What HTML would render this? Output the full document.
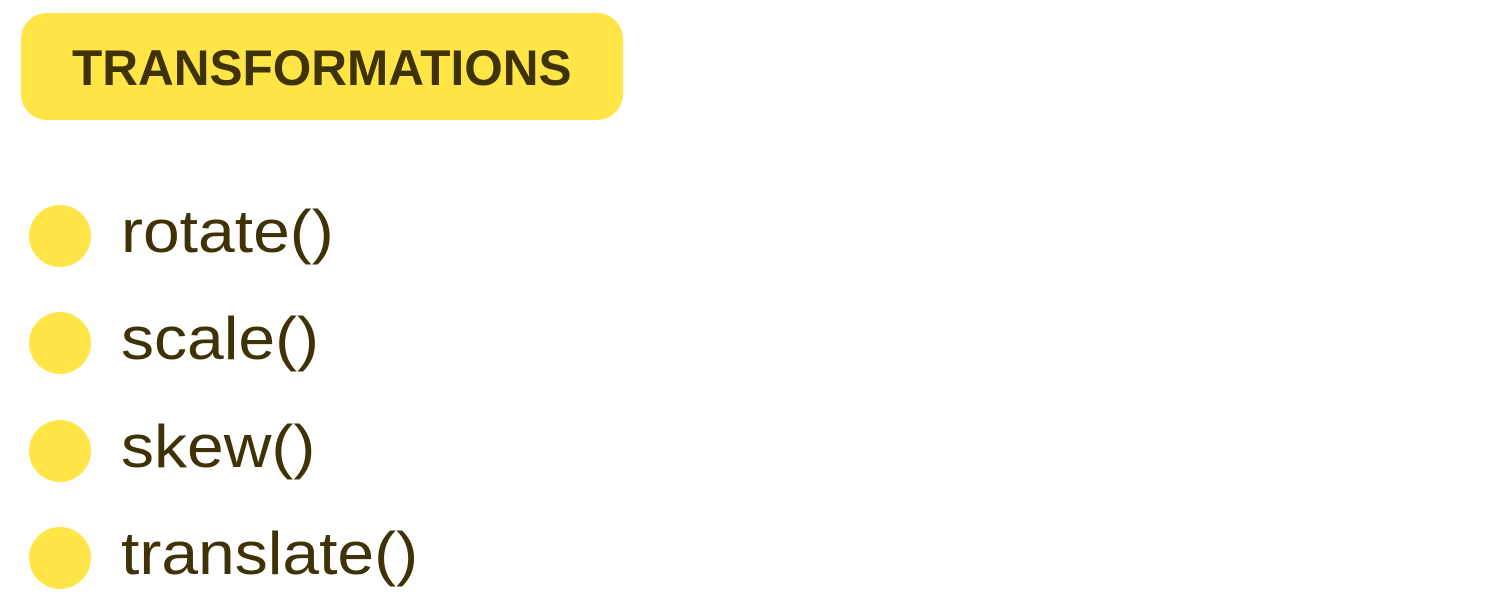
<!DOCTYPE html>
<html><head><meta charset="utf-8"><style>
html,body{margin:0;padding:0;background:#fff;width:1491px;height:603px;overflow:hidden;font-family:"Liberation Sans",sans-serif;color:#3f3206}
.badge{position:absolute;left:21px;top:13px;width:602px;height:107px;border-radius:26px;background:#ffe546}
.badge span{position:absolute;left:51px;top:30px;font-weight:bold;font-size:50px;line-height:50px;transform-origin:0 0;transform:scaleX(0.99);white-space:nowrap}
.dot{position:absolute;left:29px;width:62px;height:62px;border-radius:50%;background:#ffe546}
.t{position:absolute;left:121px;font-size:60px;line-height:60px;transform-origin:0 0;transform:scaleX(1.1);white-space:nowrap}
</style></head><body>
<div class="badge"><span>TRANSFORMATIONS</span></div>
<div class="dot" style="top:205px"></div><div class="t" style="top:202px">rotate()</div>
<div class="dot" style="top:312px"></div><div class="t" style="top:309px">scale()</div>
<div class="dot" style="top:420px"></div><div class="t" style="top:417px">skew()</div>
<div class="dot" style="top:527px"></div><div class="t" style="top:524px">translate()</div>
</body></html>
